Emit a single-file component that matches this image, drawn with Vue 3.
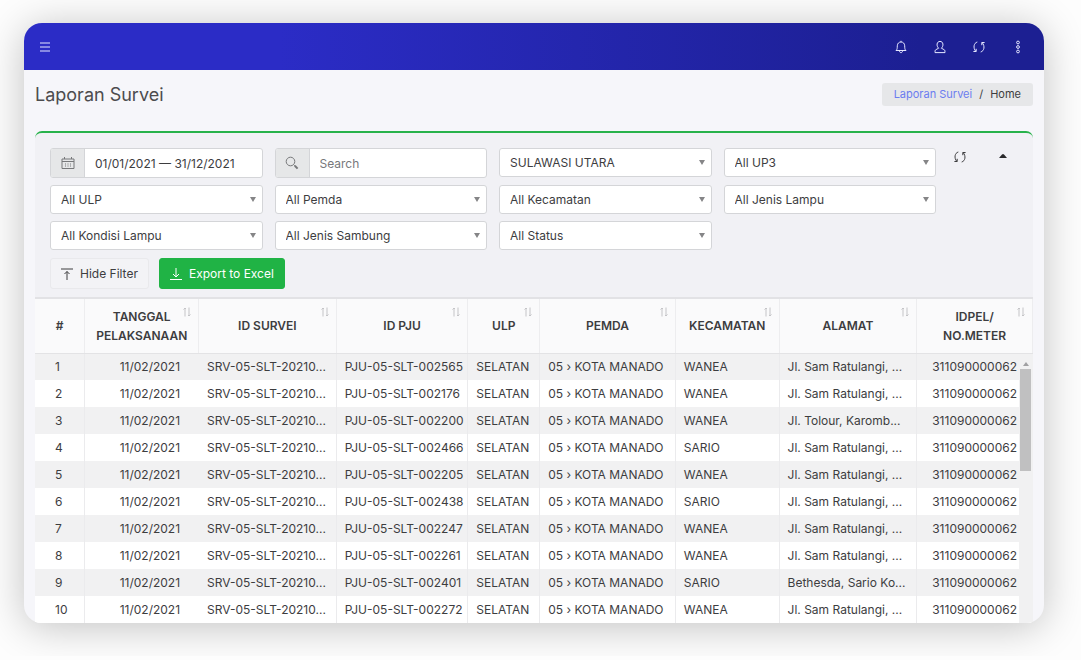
<script setup>
import { ref } from 'vue'

const period = ref('01/01/2021 — 31/12/2021')
const search = ref('')

const filters = [
  { id: 'province', label: 'Provinsi', value: 'SULAWASI UTARA' },
  { id: 'up3', label: 'UP3', value: 'All UP3' },
  { id: 'ulp', label: 'ULP', value: 'All ULP' },
  { id: 'pemda', label: 'Pemda', value: 'All Pemda' },
  { id: 'kecamatan', label: 'Kecamatan', value: 'All Kecamatan' },
  { id: 'lampu', label: 'Jenis Lampu', value: 'All Jenis Lampu' },
  { id: 'kondisi', label: 'Kondisi Lampu', value: 'All Kondisi Lampu' },
  { id: 'sambung', label: 'Jenis Sambung', value: 'All Jenis Sambung' },
  { id: 'status', label: 'Status', value: 'All Status' },
]

const columns = [
  { key: 'no', lines: ['#'] },
  { key: 'date', lines: ['TANGGAL', 'PELAKSANAAN'] },
  { key: 'survey', lines: ['ID SURVEI'] },
  { key: 'pju', lines: ['ID PJU'] },
  { key: 'ulp', lines: ['ULP'] },
  { key: 'pemda', lines: ['PEMDA'] },
  { key: 'district', lines: ['KECAMATAN'] },
  { key: 'address', lines: ['ALAMAT'] },
  { key: 'meter', lines: ['IDPEL/', 'NO.METER'] },
]

const sam = 'Jl. Sam Ratulangi, ...'
const rows = [
  ['002565', 'WANEA', sam],
  ['002176', 'WANEA', sam],
  ['002200', 'WANEA', 'Jl. Tolour, Karomb...'],
  ['002466', 'SARIO', sam],
  ['002205', 'WANEA', sam],
  ['002438', 'SARIO', sam],
  ['002247', 'WANEA', sam],
  ['002261', 'WANEA', sam],
  ['002401', 'SARIO', 'Bethesda, Sario Ko...'],
  ['002272', 'WANEA', sam],
].map(([code, district, address], i) => ({
  no: i + 1,
  date: '11/02/2021',
  survey: 'SRV-05-SLT-20210...',
  pju: 'PJU-05-SLT-' + code,
  ulp: 'SELATAN',
  pemda: '05 › KOTA MANADO',
  district,
  address,
  meter: '311090000062',
}))
</script>

<template>
  <div class="window">
    <header class="topbar">
      <button class="icon-btn" aria-label="Menu">
        <svg width="12" height="12" viewBox="0 0 12 12"><path d="M1 2H11M1 6H11M1 10H11" /></svg>
      </button>
      <nav class="actions">
        <button class="icon-btn" aria-label="Notifications">
          <svg width="14" height="14" viewBox="0 0 14 14"><path d="M2 10.5C3.4 9.3 3.2 8 3.3 5.8C3.5 3.4 4.8 2 7 2S10.500 3.400 10.700 5.800C10.800 8 10.600 9.300 12 10.500ZM5.500 11C5.600 13.200 8.400 13.200 8.500 11M7 2V.800" /></svg>
        </button>
        <button class="icon-btn" aria-label="Profile">
          <svg width="14" height="14" viewBox="0 0 14 14"><path d="M5.700 8.200C3.200 6.200 3.500 1.400 7 1.400S10.800 6.200 8.300 8.200L11 9.600C11.800 10 12 10.600 12 12.600H2C2 10.600 2.200 10 3 9.600Z" /></svg>
        </button>
        <button class="icon-btn" aria-label="Refresh">
          <svg width="14" height="14" viewBox="0 0 14 14"><path d="M5.300 2C1.800 3 .800 7.800 3.800 11.400M1.400 11.500H4.200V8.800M8.700 12C12.200 11 13.200 6.200 10.200 2.600M12.600 2.500H9.800V5.200" /></svg>
        </button>
        <button class="icon-btn" aria-label="More">
          <svg width="14" height="14" viewBox="0 0 14 14"><circle cx="7" cy="2.500" r="1.400" /><circle cx="7" cy="7" r="1.400" /><circle cx="7" cy="11.500" r="1.400" /></svg>
        </button>
      </nav>
    </header>

    <main class="content">
      <div class="heading">
        <h1>Laporan Survei</h1>
        <nav class="crumbs" aria-label="Breadcrumb">
          <a href="#">Laporan Survei</a><span class="slash">/</span><span>Home</span>
        </nav>
      </div>

      <section class="panel">
        <div class="filters">
          <div class="filter-row">
            <div class="grid">
              <div class="group">
                <label for="period" aria-label="Period">
                  <svg width="14" height="14" viewBox="0 0 14 14"><path d="M1 3H13V12.500H1ZM1 5.500H13M3.500 1V3M10.500 1V3M4 8H5M6.500 8H7.500M9 8H10M4 10H5M6.500 10H7.500M9 10H10" /></svg>
                </label>
                <input id="period" v-model="period" type="text" />
              </div>
              <div class="group">
                <label for="search" aria-label="Search">
                  <svg width="14" height="14" viewBox="0 0 14 14"><circle cx="5.500" cy="5.500" r="4.300" /><path d="M8.600 8.600L9.800 9.800" /><path class="handle" d="M9.800 9.800L12.600 12.600" /></svg>
                </label>
                <input id="search" v-model="search" type="text" placeholder="Search" />
              </div>
              <div v-for="f in filters" :key="f.id" class="picker">
                <select :id="f.id" :aria-label="f.label"><option>{{ f.value }}</option></select>
                <svg width="6" height="5" viewBox="0 0 6 5"><path d="M0 0H6L3 5Z" /></svg>
              </div>
            </div>
            <div class="tools">
              <button class="icon-btn" aria-label="Reload">
                <svg width="14" height="14" viewBox="0 0 14 14"><path d="M5.300 2C1.800 3 .800 7.800 3.800 11.400M1.400 11.500H4.200V8.800M8.700 12C12.200 11 13.200 6.200 10.200 2.600M12.600 2.500H9.800V5.200" /></svg>
              </button>
              <button class="icon-btn" aria-label="Collapse">
                <svg class="solid" width="8" height="14" viewBox="0 0 8 14"><path d="M0 8L3 4.500Q4 3.500 5 4.500L8 8Z" /></svg>
              </button>
            </div>
          </div>
          <div class="buttons">
            <button class="btn">
              <svg width="12" height="12" viewBox="0 0 12 12"><path d="M0 1H12M6 12V3.500M3.500 6L6 3.500L8.500 6" /></svg>
              Hide Filter
            </button>
            <button class="btn primary">
              <svg width="12" height="12" viewBox="0 0 12 12"><path d="M0 11.500H12M6 0V9M3 6L6 9L9 6" /></svg>
              Export to Excel
            </button>
          </div>
        </div>

        <div class="table-box">
          <table>
            <colgroup><col v-for="c in columns" :key="c.key" :class="'w-' + c.key" /></colgroup>
            <thead>
              <tr>
                <th v-for="c in columns" :key="c.key" scope="col">
                  <span v-for="l in c.lines" :key="l" class="line">{{ l }}</span>
                  <svg v-if="c.key !== 'no'" class="sort" width="8" height="10" viewBox="0 0 8 10"><path d="M2 9.500V1M.500 2.500L2 1L3 2M6 .500V9M5 8L6 9L7.500 7.500" /></svg>
                </th>
              </tr>
            </thead>
            <tbody>
              <tr v-for="r in rows" :key="r.no">
                <td v-for="c in columns" :key="c.key" :class="'c-' + c.key">{{ r[c.key] }}</td>
              </tr>
            </tbody>
          </table>
          <div class="scrollbar" aria-hidden="true">
            <svg width="6" height="4" viewBox="0 0 6 4"><path d="M0 4L3 0L6 4Z" /></svg>
            <div class="thumb"></div>
          </div>
        </div>
      </section>
    </main>
  </div>
</template>

<style>
body {
  background: #fdfdfd;
  overflow: hidden;
}
#app {
  box-sizing: border-box;
  padding: 23px 37px 33px 24px;
}
</style>

<style scoped>
* {
  box-sizing: border-box;
}
.window {
  overflow: hidden;
  border-radius: 18px;
  background: #f6f6fa;
  box-shadow: 0 4px 40px rgba(0, 0, 0, 0.24);
  color: #3d3d3f;
  font-family: Inter, "Liberation Sans", sans-serif;
  font-size: 12px;
}
button,
input,
select {
  font: inherit;
  color: inherit;
}
svg {
  display: block;
  fill: none;
  stroke: currentColor;
}
.icon-btn {
  padding: 0;
  border: 0;
  background: none;
}
.topbar {
  display: flex;
  align-items: center;
  justify-content: space-between;
  height: 47px;
  padding: 0 19px 0 15px;
  background: linear-gradient(90deg, #2b2cc6 25%, #1c1f92 88%);
  color: #e4e6ff;
}
.actions {
  display: flex;
  gap: 25px;
}
.content {
  padding: 0 11px;
}
.heading {
  display: flex;
  align-items: center;
  justify-content: space-between;
  height: 48px;
}
h1 {
  margin: 0;
  font-size: 18px;
  font-weight: 400;
  color: #4c4c4e;
}
.crumbs {
  display: flex;
  align-items: center;
  height: 23px;
  padding: 0 12px;
  border-radius: 3px;
  background: #e6e7e9;
  font-size: 11px;
}
.crumbs a {
  color: #6b7cf0;
  text-decoration: none;
}
.slash {
  margin: 0 7px;
}
.panel {
  margin-top: 13px;
  border-top: 2px solid #28b24b;
  border-radius: 7px 7px 0 0;
  background: #f1f1f5;
}
.filters {
  padding: 15px 15px 8px;
}
.filter-row {
  display: flex;
}
.grid {
  flex: 1;
  display: grid;
  grid-template-columns: repeat(4, 1fr);
  gap: 7px 12px;
}
.tools {
  display: flex;
  align-items: flex-start;
  gap: 32px;
  padding: 2px 11px 0 17px;
}
.group {
  display: flex;
  height: 30px;
  border: 1px solid #d4d5d8;
  border-radius: 3px;
  background: #fff;
  overflow: hidden;
}
.group label {
  display: flex;
  align-items: center;
  justify-content: center;
  width: 34px;
  border-right: 1px solid #d4d5d8;
  background: #e6e7e8;
  color: #77787a;
}
.handle {
  stroke-width: 2;
}
.group input {
  flex: 1;
  min-width: 0;
  padding: 0 10px;
  border: 0;
  background: none;
  outline: 0;
}
.group input::placeholder {
  color: #77787b;
  opacity: 1;
}
.picker {
  position: relative;
  height: 29px;
}
.picker select {
  width: 100%;
  height: 100%;
  padding: 0 10px;
  border: 1px solid #d4d5d8;
  border-radius: 3px;
  background: #fff;
  appearance: none;
}
.picker svg {
  position: absolute;
  right: 7px;
  top: 12px;
  fill: #858587;
  stroke: none;
}
.solid {
  fill: #29292b;
  stroke: none;
}
.buttons {
  display: flex;
  gap: 10px;
  margin-top: 8px;
}
.btn {
  display: flex;
  align-items: center;
  gap: 7px;
  height: 31px;
  padding: 0 10px;
  border: 1px solid #e9e9ec;
  border-radius: 3px;
  background: #f3f3f6;
}
.primary {
  border-color: #20b345;
  background: #20b345;
  color: #fff;
}
.table-box {
  position: relative;
  border-top: 2px solid #e2e2e5;
  background: #fafafb;
}
table {
  width: 100%;
  table-layout: fixed;
  border-collapse: collapse;
}
th {
  position: relative;
  height: 54px;
  padding: 0;
  border-right: 1px solid #ededef;
  border-bottom: 1px solid #e3e3e5;
  font-weight: 600;
  line-height: 19px;
}
.line {
  display: block;
}
.sort {
  position: absolute;
  top: 8px;
  right: 7px;
  color: #c4c4c7;
}
td {
  height: 27px;
  padding: 0 0 0 8px;
  border-right: 1px solid #ebebed;
  line-height: 16px;
  white-space: nowrap;
}
tbody tr {
  background: #fff;
}
tbody tr:nth-child(odd) {
  background: #f1f1f2;
}
.w-no { width: 5%; }
.w-date { width: 11.400%; }
.w-survey { width: 13.800%; }
.w-pju { width: 13.200%; }
.w-ulp { width: 7.200%; }
.w-pemda { width: 13.600%; }
.w-district { width: 10.400%; }
.w-address { width: 13.800%; }
.w-meter { width: 11.600%; }
.c-no {
  padding-left: 20px;
}
.c-date {
  padding: 0 18px 0 0;
  border-right-color: transparent;
  text-align: right;
}
.c-meter {
  padding-left: 15px;
}
.scrollbar {
  position: absolute;
  top: 55px;
  right: 0;
  bottom: 0;
  width: 14px;
  padding: 8px 2px 0 1px;
  background: #f1f1f2;
}
.scrollbar svg {
  margin: 0 auto 3px;
  fill: #a0a0a2;
  stroke: none;
}
.thumb {
  height: 102px;
  background: #c0c0c1;
}
</style>
